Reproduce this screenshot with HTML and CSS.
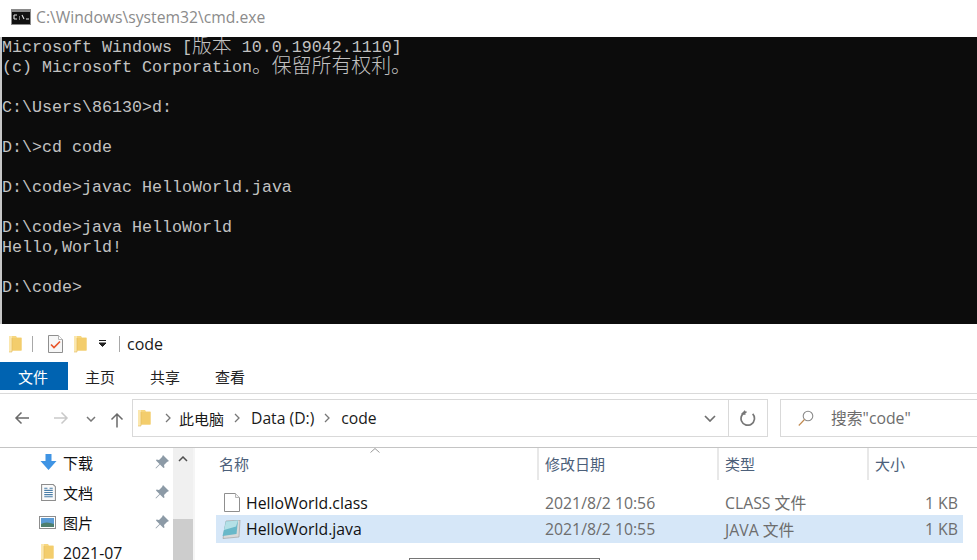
FILE: index.html
```html
<!DOCTYPE html>
<html lang="zh">
<head>
<meta charset="utf-8">
<title>cmd</title>
<link rel="stylesheet" href="styles.css">
</head>
<body>
<svg class="defs" width="0" height="0">
  <defs>
    <symbol id="folder" viewBox="0 0 13 18">
      <path d="M0 1h7l1 1.500h4.500v13H2.500L0 17z" fill="#f6d67f"/>
      <path d="M0 1h3v16H0z" fill="#fbe7ae"/>
      <path d="M3 3h9.500v12.500H3z" fill="#f3cd6c"/>
      <path d="M3 3v14L0 17" fill="none" stroke="#e3b95a" stroke-width=".6"/>
    </symbol>
  </defs>
</svg>
<div class="page">
  <header class="titlebar">
    <svg class="cmd-icon" viewBox="0 0 20 16" width="20" height="16">
      <rect width="20" height="16" fill="#8a8a8a"/>
      <rect y="3" x="1" width="18" height="12" fill="#111"/>
      <path d="M3 6H6M3 6v4M3 10H6M8 8h1M8 10h1M11 6l2 4M15 10h3" stroke="#e6e6e6" stroke-width="1.100" fill="none"/>
    </svg>
    <span class="title-text">C:\Windows\system32\cmd.exe</span>
  </header>
  <pre class="console">Microsoft Windows [<span class="cjk">版本</span> 10.0.19042.1110]
(c) Microsoft Corporation<span class="cjk">。保留所有权利。</span>

C:\Users\86130&gt;d:

D:\&gt;cd code

D:\code&gt;javac HelloWorld.java

D:\code&gt;java HelloWorld
Hello,World!

D:\code&gt;</pre>
  <section class="explorer">
    <div class="quick">
      <svg class="q-folder"><use href="#folder"/></svg>
      <span class="q-sep"></span>
      <svg class="q-check" viewBox="0 0 15 18" width="15" height="18">
        <path d="M.5.500h10l4 4v13H.5z" fill="#f7f7f7" stroke="#8f8f8f"/>
        <path d="M10.500.500v4h4" fill="#fff" stroke="#b5b5b5"/>
        <path d="M3 9.500l3 3 6-6" fill="none" stroke="#e8562a" stroke-width="1.700"/>
      </svg>
      <svg class="q-folder2"><use href="#folder"/></svg>
      <svg class="q-drop" viewBox="0 0 7 7" width="7" height="7">
        <path d="M0 .500h7M0 3h7L3.500 6.500z" stroke="#222" stroke-width="1" fill="#222"/>
      </svg>
      <span class="q-sep q-sep2"></span>
      <span class="q-title">code</span>
    </div>
    <nav class="tabs">
      <span class="tab tab-file">文件</span>
      <span class="tab tab-home">主页</span>
      <span class="tab tab-share">共享</span>
      <span class="tab tab-view">查看</span>
    </nav>
    <div class="address-row">
      <svg class="nav-btn back" viewBox="0 0 16 14" width="16" height="14"><path d="M15 7H2M7.500 1.500L2 7l5.500 5.500" fill="none" stroke="#6a6a6a" stroke-width="1.500"/></svg>
      <svg class="nav-btn fwd" viewBox="0 0 16 14" width="16" height="14"><path d="M1 7h13M8.500 1.500L14 7l-5.500 5.500" fill="none" stroke="#c9c9c9" stroke-width="1.500"/></svg>
      <svg class="nav-btn hist" viewBox="0 0 10 6" width="10" height="6"><path d="M1 1l4 4 4-4" fill="none" stroke="#777" stroke-width="1.500"/></svg>
      <svg class="nav-btn up" viewBox="0 0 14 16" width="14" height="16"><path d="M7 15.500V2M1.500 7.500L7 2l5.500 5.500" fill="none" stroke="#6a6a6a" stroke-width="1.500"/></svg>
      <div class="address">
        <svg class="a-folder"><use href="#folder"/></svg>
        <svg class="crumb-arrow" viewBox="0 0 6 10" width="6" height="10"><path d="M1 1l4 4-4 4" fill="none" stroke="#777" stroke-width="1.300"/></svg>
        <span class="crumb crumb-cjk">此电脑</span>
        <svg class="crumb-arrow" viewBox="0 0 6 10" width="6" height="10"><path d="M1 1l4 4-4 4" fill="none" stroke="#777" stroke-width="1.300"/></svg>
        <span class="crumb">Data (D:)</span>
        <svg class="crumb-arrow" viewBox="0 0 6 10" width="6" height="10"><path d="M1 1l4 4-4 4" fill="none" stroke="#777" stroke-width="1.300"/></svg>
        <span class="crumb">code</span>
        <svg class="addr-drop" viewBox="0 0 12 7" width="12" height="7"><path d="M1 1l5 5 5-5" fill="none" stroke="#707070" stroke-width="1.700"/></svg>
        <span class="refresh">
          <svg viewBox="0 0 16 16" width="16" height="16"><path d="M4.500 2.800A6.700 6.700 0 1 0 11 2.600" fill="none" stroke="#777" stroke-width="1.700" transform="rotate(20 8 8)"/><path d="M5 0l.5 5L1 4z" fill="#777"/></svg>
        </span>
      </div>
      <div class="search">
        <svg viewBox="0 0 16 16" width="16" height="16"><circle cx="10" cy="6" r="4.800" fill="none" stroke="#8a8a8a" stroke-width="1.100"/><path d="M6.500 9.500L.8 15.500" stroke="#c0894e" stroke-width="1.100"/></svg>
        <span class="search-text">搜索"code"</span>
      </div>
    </div>
    <div class="main">
      <aside class="nav-pane">
        <div class="nav-item">
          <svg class="n-icon" viewBox="0 0 16 16" width="16" height="16"><path d="M5 0h6v7h5l-8 9-8-9h5z" fill="#3f94e4"/></svg>
          <span class="n-label">下载</span>
          <svg class="pin" viewBox="0 0 14 14" width="14" height="14"><path d="M8 0l6 6-2 1-3 3 .5 2.500-1 .5L5 9.500 1 13.500 .5 13l4-4L1 5.500l.5-1L4 5l3-3z" fill="#8c9aa6"/></svg>
        </div>
        <div class="nav-item">
          <svg class="n-icon" viewBox="0 0 16 16" width="16" height="17"><path d="M1.500.500h11l2 2v13h-13z" fill="#fafafa" stroke="#8d8d8d"/><path d="M4 4h3M4 6h8M4 8h8M4 10h8M4 12h8M9 4h3" stroke="#4a7ea8"/></svg>
          <span class="n-label">文档</span>
          <svg class="pin" viewBox="0 0 14 14" width="14" height="14"><path d="M8 0l6 6-2 1-3 3 .5 2.500-1 .5L5 9.500 1 13.500 .5 13l4-4L1 5.500l.5-1L4 5l3-3z" fill="#8c9aa6"/></svg>
        </div>
        <div class="nav-item">
          <svg class="n-icon n-pic" viewBox="0 0 17 13" width="17" height="13"><rect x=".5" y=".5" width="16" height="12" fill="#fff" stroke="#8d8d8d"/><rect x="2" y="2" width="13" height="9" fill="#5b9bd5"/><path d="M2 8q5-3 13 0v3H2z" fill="#4e7f6e"/></svg>
          <span class="n-label">图片</span>
          <svg class="pin" viewBox="0 0 14 14" width="14" height="14"><path d="M8 0l6 6-2 1-3 3 .5 2.500-1 .5L5 9.500 1 13.500 .5 13l4-4L1 5.500l.5-1L4 5l3-3z" fill="#8c9aa6"/></svg>
        </div>
        <div class="nav-item">
          <svg class="n-icon n-fold"><use href="#folder"/></svg>
          <span class="n-label n-label-latin">2021-07</span>
        </div>
      </aside>
      <div class="scrollbar">
        <svg class="scroll-up" viewBox="0 0 10 6" width="10" height="6"><path d="M1 5l4-4 4 4" fill="none" stroke="#505050" stroke-width="1.500"/></svg>
        <div class="scroll-thumb"></div>
      </div>
      <div class="files">
        <div class="file-head">
          <span class="h-name">名称
            <svg class="sort" viewBox="0 0 10 5" width="10" height="5"><path d="M.5 4.500L5 .5l4.500 4" fill="none" stroke="#9a9a9a"/></svg>
          </span>
          <span class="h-cell">修改日期</span>
          <span class="h-cell">类型</span>
          <span class="h-cell">大小</span>
        </div>
        <div class="file-row">
          <span class="f-name">
            <svg class="f-icon" viewBox="0 0 16 19" width="16" height="19"><path d="M.5.500h11l4 4v14H.5z" fill="#fff" stroke="#8f8f8f"/><path d="M11.500.500v4h4" fill="#f2f2f2" stroke="#b5b5b5"/></svg>
            HelloWorld.class
          </span>
          <span class="f-date">2021/8/2 10:56</span>
          <span class="f-type">CLASS 文件</span>
          <span class="f-size">1 KB</span>
        </div>
        <div class="file-row selected">
          <span class="f-name">
            <svg class="f-icon" viewBox="0 0 20 19" width="20" height="19"><path d="M5 1l14-1-1 17-16 1.500z" fill="#d9d9d9" stroke="#9a9a9a" stroke-width=".6"/><path d="M5 1.500l12-1L15.500 14 1.500 16z" fill="#69b8c9"/><path d="M5 1.500l12-1-2 6L3 10z" fill="#b4e0e6"/></svg>
            HelloWorld.java
          </span>
          <span class="f-date">2021/8/2 10:55</span>
          <span class="f-type">JAVA 文件</span>
          <span class="f-size">1 KB</span>
        </div>
      </div>
    </div>
    <div class="tooltip-edge"></div>
  </section>
</div>
</body>
</html>
```

FILE: styles.css
```css
* { box-sizing: border-box; }
html, body { margin: 0; padding: 0; }
body {
  width: 977px;
  height: 560px;
  overflow: hidden;
  background: #fff;
  font-family: "Open Sans", "Noto Sans CJK SC", sans-serif;
}
.defs { position: absolute; }
.page { display: flex; flex-direction: column; width: 977px; height: 560px; }

.titlebar {
  height: 37px;
  display: flex;
  align-items: center;
  padding: 0 0 3px 11px;
  gap: 5px;
  background: #fff;
}
.cmd-icon { flex: none; }
.title-text { font-size: 15.700px; color: #8b8b8b; white-space: nowrap; }

.console {
  margin: 0;
  padding-top: 1px;
  height: 287px;
  flex: none;
  background: #0c0c0c;
  border-left: 2px solid #c8c8c8;
  color: #c2c2c2;
  font-family: "Liberation Mono", monospace;
  font-size: 16.670px;
  line-height: 20px;
  overflow: hidden;
  white-space: pre;
}
.cjk { font-family: "Noto Sans CJK SC", sans-serif; font-weight: 300; font-size: 19.900px; line-height: 0; vertical-align: -1px; }

.explorer { position: relative; flex: 1; display: flex; flex-direction: column; min-height: 0; }

.quick { height: 38px; display: flex; align-items: center; padding: 1px 0 0 9px; flex: none; }
.q-folder, .q-folder2, .a-folder { width: 13px; height: 18px; flex: none; }
.q-sep { width: 1px; height: 16px; background: #a8a8a8; margin-left: 10px; }
.q-check { margin-left: 15px; flex: none; }
.q-folder2 { margin-left: 11px; }
.q-drop { margin-left: 12px; }
.q-sep2 { margin-left: 13px; }
.q-title { margin-left: 7px; font-size: 16px; color: #1a1a1a; }

.tabs { height: 28px; display: flex; align-items: stretch; flex: none; font-family: "Noto Sans CJK SC", sans-serif; font-size: 15px; color: #222; }
.tab { display: flex; align-items: center; }
.tab-file { width: 68px; padding-right: 2px; justify-content: center; background: #0063b1; color: #fff; }
.tab-home { margin-left: 17px; }
.tab-share { margin-left: 35px; }
.tab-view { margin-left: 35px; }

.address-row {
  margin-top: 3px;
  height: 54px;
  flex: none;
  border-top: 1px solid #dadada;
  display: flex;
  align-items: flex-start;
  padding-top: 5px;
  position: relative;
}
.nav-btn { flex: none; margin-top: 12px; }
.back { margin-left: 14px; }
.fwd { margin-left: 23px; }
.hist { margin-left: 17px; margin-top: 17px; }
.up { margin-left: 14px; margin-top: 13px; }
.address {
  margin-left: 8px;
  width: 636px;
  height: 38px;
  border: 1px solid #d9d9d9;
  display: flex;
  align-items: center;
  padding-left: 5px;
  font-size: 15.700px;
  color: #1a1a1a;
  flex: none;
}
.crumb-arrow { flex: none; margin: 0 8px 0 14px; }
.crumb { white-space: nowrap; }
.crumb-cjk { font-size: 15px; }
.crumb + .crumb-arrow { margin-left: 10px; margin-right: 11px; }
.addr-drop { margin-left: auto; margin-right: 12px; }
.refresh { width: 39px; height: 36px; border-left: 1px solid #d9d9d9; display: flex; align-items: center; justify-content: center; }
.search {
  margin-left: 12px;
  flex: 1;
  height: 38px;
  border: 1px solid #d9d9d9;
  border-right: 0;
  display: flex;
  align-items: center;
  padding: 0 0 1px 17px;
  gap: 17px;
  min-width: 0;
}
.search-text { font-size: 15.800px; color: #6d6d6d; white-space: nowrap; }

.main {
  flex: 1;
  min-height: 0;
  border-top: 1px solid #c4c4c4;
  display: grid;
  grid-template-columns: 173px 20px 1fr;
}
.nav-pane { margin-top: -1px; overflow: visible; }
.nav-item { height: 30px; display: flex; align-items: center; padding-left: 40px; position: relative; }
.n-icon { flex: none; width: 17px; }
.n-pic { margin-left: -1px; }
.n-fold { margin-left: 1px; width: 13px; height: 18px; }
.n-label { position: absolute; left: 63px; font-size: 15px; color: #111; white-space: nowrap; }
.n-label-latin { margin-top: 2px; font-size: 15.800px; }
.pin { position: absolute; left: 155px; }

.scrollbar { background: #f0f0f0; display: flex; flex-direction: column; align-items: center; padding-top: 8px; }
.scroll-up { flex: none; }
.scroll-thumb { margin-top: 57px; width: 100%; flex: 1; background: #cdcdcd; }

.files { border-left: 2px solid #f5f5f5; padding-left: 21px; min-width: 0; }
.file-head {
  height: 32px;
  display: grid;
  grid-template-columns: 321px 180px 150px 100px;
  font-size: 15px;
  color: #4c607a;
  font-family: "Noto Sans CJK SC", sans-serif;
  position: relative;
}
.file-head > span { display: flex; align-items: center; padding-bottom: 2px; }
.h-name { position: relative; padding-left: 3px; }
.h-cell { border-left: 2px solid #e8e8e8; padding-left: 6px; }
.sort { position: absolute; left: 154px; top: 0; }

.file-row {
  width: 747px;
  height: 28px;
  display: grid;
  grid-template-columns: 329px 180px 150px 83px;
  align-items: center;
  font-size: 15.800px;
  color: #6d6d6d;
  white-space: nowrap;
}
.file-head + .file-row { margin-top: 10px; height: 25px; }
.selected { background: #d6e7f8; }
.f-name { display: flex; align-items: center; color: #111; padding-left: 8px; gap: 6px; }
.f-icon { flex: none; }
.selected .f-name { padding-left: 5px; gap: 5px; }
.f-size { text-align: right; }

.tooltip-edge {
  position: absolute;
  left: 409px;
  top: 234px;
  width: 191px;
  height: 4px;
  border: 1px solid #767676;
  border-bottom: 0;
  background: #fff;
}
```
